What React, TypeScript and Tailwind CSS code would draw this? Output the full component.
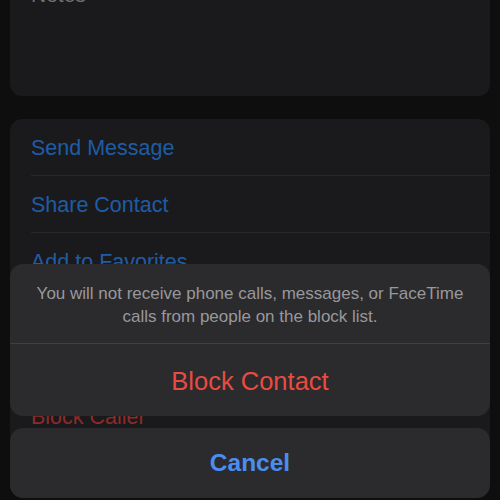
export default function App() {
  const font = { fontFamily: '"Liberation Sans", Arial, sans-serif' };
  const rows = ['Send Message', 'Share Contact', 'Add to Favorites', 'Share My Location'];

  return (
    <div className="relative w-[500px] h-[500px] overflow-hidden bg-[#0e0e0f]" style={font}>
      {/* Contact page behind (dimmed) */}
      <div className="flex flex-col px-[10px] -mt-[40px]">
        <div className="h-[136px] rounded-[12px] bg-[#1a1a1c] px-[21px] pt-[24px]">
          <span className="text-[21px] leading-none text-[#727276]">Notes</span>
        </div>

        <div className="mt-[23px] rounded-[12px] bg-[#1a1a1c] pl-[21px]">
          {rows.map((r, i) => (
            <div
              key={r}
              className={`h-[57px] flex items-center pt-[2px] text-[21.5px] text-[#1f5ca6] ${
                i < rows.length - 1 ? 'border-b border-[#27272a]' : ''
              }`}
            >
              {r}
            </div>
          ))}
        </div>

        <div className="mt-[42px] rounded-[12px] bg-[#1a1a1c] pl-[21px]">
          <div className="h-[57px] flex items-center text-[21.5px] text-[#8c2b29]">Block Caller</div>
        </div>
      </div>

      {/* Action sheet */}
      <div className="absolute left-[10px] right-[10px] top-[264px] flex flex-col gap-[12px]">
        <div className="rounded-[13px] bg-[#2b2b2d] overflow-hidden">
          <div className="h-[79px] flex items-center justify-center px-[16px] pt-[2px] text-center text-[17px] leading-[23px] text-[#98989c]">
            You will not receive phone calls, messages, or FaceTime calls from people on the block list.
          </div>
          <div className="h-px bg-[#404043]" />
          <div className="h-[72px] flex items-center justify-center pt-[2px] text-[25.5px] text-[#ea4a40]">
            Block Contact
          </div>
        </div>
        <div className="h-[70px] rounded-[13px] bg-[#2b2b2d] flex items-center justify-center text-[24.5px] font-bold text-[#4a8ef0]">
          Cancel
        </div>
      </div>
    </div>
  );
}
